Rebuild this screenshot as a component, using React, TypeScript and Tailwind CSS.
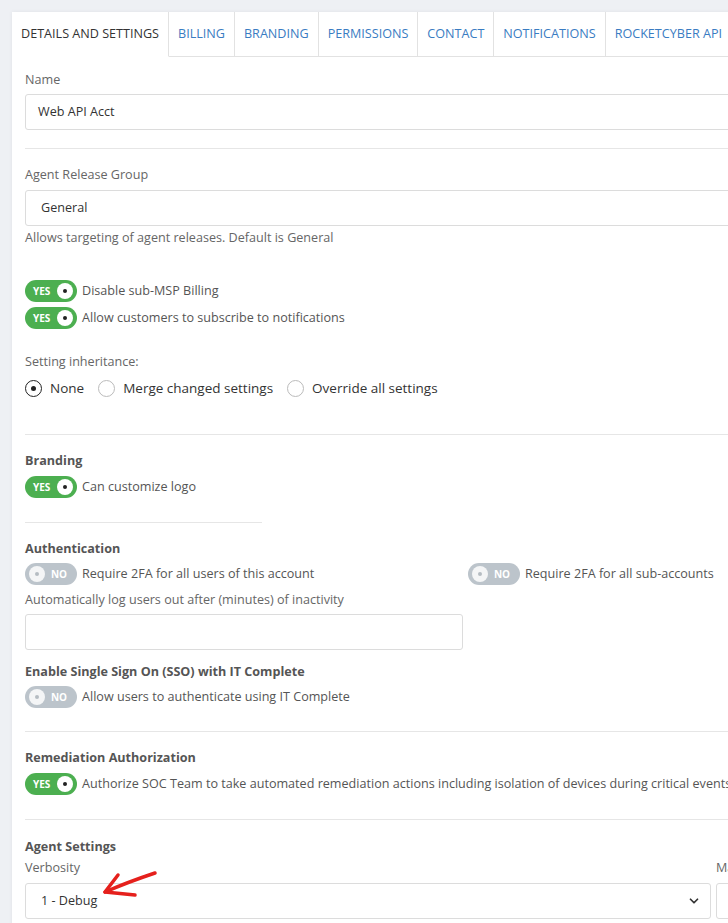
import { ChevronDown } from "lucide-react";

const tabs = [
  "Details and Settings",
  "Billing",
  "Branding",
  "Permissions",
  "Contact",
  "Notifications",
  "RocketCyber API",
];

function Toggle({ on }: { on: boolean }) {
  if (on) {
    return (
      <span className="flex h-[22px] w-[52px] shrink-0 items-center justify-between rounded-full bg-[#4caf50] pl-[8px] pr-[4px]">
        <span className="text-[10px] font-bold leading-none text-white">YES</span>
        <span className="flex h-4 w-4 items-center justify-center rounded-full bg-white">
          <span className="h-[4px] w-[4px] rounded-full bg-[#222]" />
        </span>
      </span>
    );
  }
  return (
    <span className="flex h-[22px] w-[52px] shrink-0 items-center justify-between rounded-full bg-[#bcc4cb] pl-[4px] pr-[10px]">
      <span className="flex h-4 w-4 items-center justify-center rounded-full bg-[#f4f5f6]">
        <span className="h-[4px] w-[4px] rounded-full bg-[#b5bcc2]" />
      </span>
      <span className="text-[10px] font-bold leading-none text-white">NO</span>
    </span>
  );
}

function ToggleRow({ on, label, className = "" }: { on: boolean; label: string; className?: string }) {
  return (
    <div className={`flex h-[22px] items-center gap-[5px] ${className}`}>
      <Toggle on={on} />
      <span className="whitespace-nowrap text-[12.6px] text-[#555]">{label}</span>
    </div>
  );
}

function Radio({ checked, label }: { checked: boolean; label: string }) {
  return (
    <label className="flex items-center gap-[8px]">
      <span
        className={`flex h-[17px] w-[17px] items-center justify-center rounded-full border bg-white ${
          checked ? "border-[#222]" : "border-[#bbb]"
        }`}
      >
        {checked && <span className="h-[5px] w-[5px] rounded-full bg-[#222]" />}
      </span>
      <span className="text-[13.5px] text-[#333]">{label}</span>
    </label>
  );
}

const Label = ({ children, className = "" }: { children: React.ReactNode; className?: string }) => (
  <div className={`whitespace-nowrap text-[12.6px] leading-[18px] text-[#666] ${className}`}>{children}</div>
);

const Heading = ({ children, className = "" }: { children: React.ReactNode; className?: string }) => (
  <div className={`text-[12.6px] font-bold leading-[18px] text-[#555] ${className}`}>{children}</div>
);

const Divider = ({ className = "" }: { className?: string }) => <div className={`h-px bg-[#e6e6e6] ${className}`} />;

export default function App() {
  return (
    <div className="relative h-[923px] w-[728px] overflow-hidden bg-[#eef0f4] pl-3 pt-3 font-['Open_Sans',sans-serif]">
      <div className="w-[1400px] bg-white pb-10 shadow-[0_0_4px_rgba(0,0,0,0.06)]">
        {/* tabs */}
        <div className="flex h-[45px]">
          {tabs.map((t, i) => (
            <div
              key={t}
              className={`flex items-center whitespace-nowrap border-r border-[#e2e2e2] px-[9px] text-[12.6px] uppercase ${
                i === 0 ? "border-b border-b-transparent text-[#333]" : "border-b text-[#3a7cc2]"
              }`}
            >
              {t}
            </div>
          ))}
          <div className="flex-1 border-b border-[#e2e2e2]" />
        </div>

        <div className="px-[13px]">
          <Label className="mt-[14px]">Name</Label>
          <div className="mt-[5px] flex h-[36px] items-center rounded-[3px] border border-[#dcdcdc] px-[12px] text-[12.6px] text-[#333]">
            Web API Acct
          </div>
          <Divider className="mt-[18px]" />

          <Label className="mt-[17px]">Agent Release Group</Label>
          <div className="mt-[6px] flex h-[36px] items-center rounded-[3px] border border-[#dcdcdc] px-[15px] text-[12.6px] text-[#333]">
            General
          </div>
          <Label className="mt-[3px]">Allows targeting of agent releases. Default is General</Label>

          <ToggleRow on className="mt-[33px]" label="Disable sub-MSP Billing" />
          <ToggleRow on className="mt-[5px]" label="Allow customers to subscribe to notifications" />

          <Label className="mt-[24px]">Setting inheritance:</Label>
          <div className="mt-[7px] flex h-[20px] items-center gap-[14px]">
            <Radio checked label="None" />
            <Radio checked={false} label="Merge changed settings" />
            <Radio checked={false} label="Override all settings" />
          </div>
          <Divider className="mt-[36px]" />

          <Heading className="mt-[17px]">Branding</Heading>
          <ToggleRow on className="mt-[6px]" label="Can customize logo" />
          <Divider className="mt-[24px] w-[237px]" />

          <Heading className="mt-[17px]">Authentication</Heading>
          <div className="mt-[5px] flex">
            <ToggleRow on={false} className="w-[443px]" label="Require 2FA for all users of this account" />
            <ToggleRow on={false} label="Require 2FA for all sub-accounts" />
          </div>
          <Label className="mt-[6px]">Automatically log users out after (minutes) of inactivity</Label>
          <div className="mt-[5px] h-[36px] w-[438px] rounded-[3px] border border-[#dcdcdc]" />

          <Heading className="mt-[13px]">Enable Single Sign On (SSO) with IT Complete</Heading>
          <ToggleRow on={false} className="mt-[5px]" label="Allow users to authenticate using IT Complete" />
          <Divider className="mt-[23px]" />

          <Heading className="mt-[17px]">Remediation Authorization</Heading>
          <ToggleRow
            on
            className="mt-[6px]"
            label="Authorize SOC Team to take automated remediation actions including isolation of devices during critical events"
          />
          <Divider className="mt-[24px]" />

          <Heading className="mt-[18px]">Agent Settings</Heading>
          <div className="mt-[3px] grid grid-cols-[686px_686px] gap-x-[5px]">
            <div>
              <Label>Verbosity</Label>
              <div className="mt-[6px] flex h-[36px] items-center justify-between rounded-[3px] border border-[#dcdcdc] pl-[15px] pr-[9px] text-[12.6px] text-[#333]">
                <span>1 - Debug</span>
                <ChevronDown size={14} strokeWidth={3} className="text-[#333]" />
              </div>
            </div>
            <div>
              <Label>Max Log Size</Label>
              <div className="mt-[6px] h-[36px] rounded-[3px] border border-[#dcdcdc]" />
            </div>
          </div>
        </div>
      </div>

      {/* annotation arrow */}
      <svg className="absolute left-[95px] top-[865px]" width="70" height="40" viewBox="0 0 70 40" fill="none">
        <path d="M60 8 C45 13 26 20 10 27" stroke="#e5201c" strokeWidth="3.5" strokeLinecap="round" />
        <path d="M23 10 L10 27 L40 30" stroke="#e5201c" strokeWidth="3.5" strokeLinecap="round" strokeLinejoin="round" />
      </svg>
    </div>
  );
}
